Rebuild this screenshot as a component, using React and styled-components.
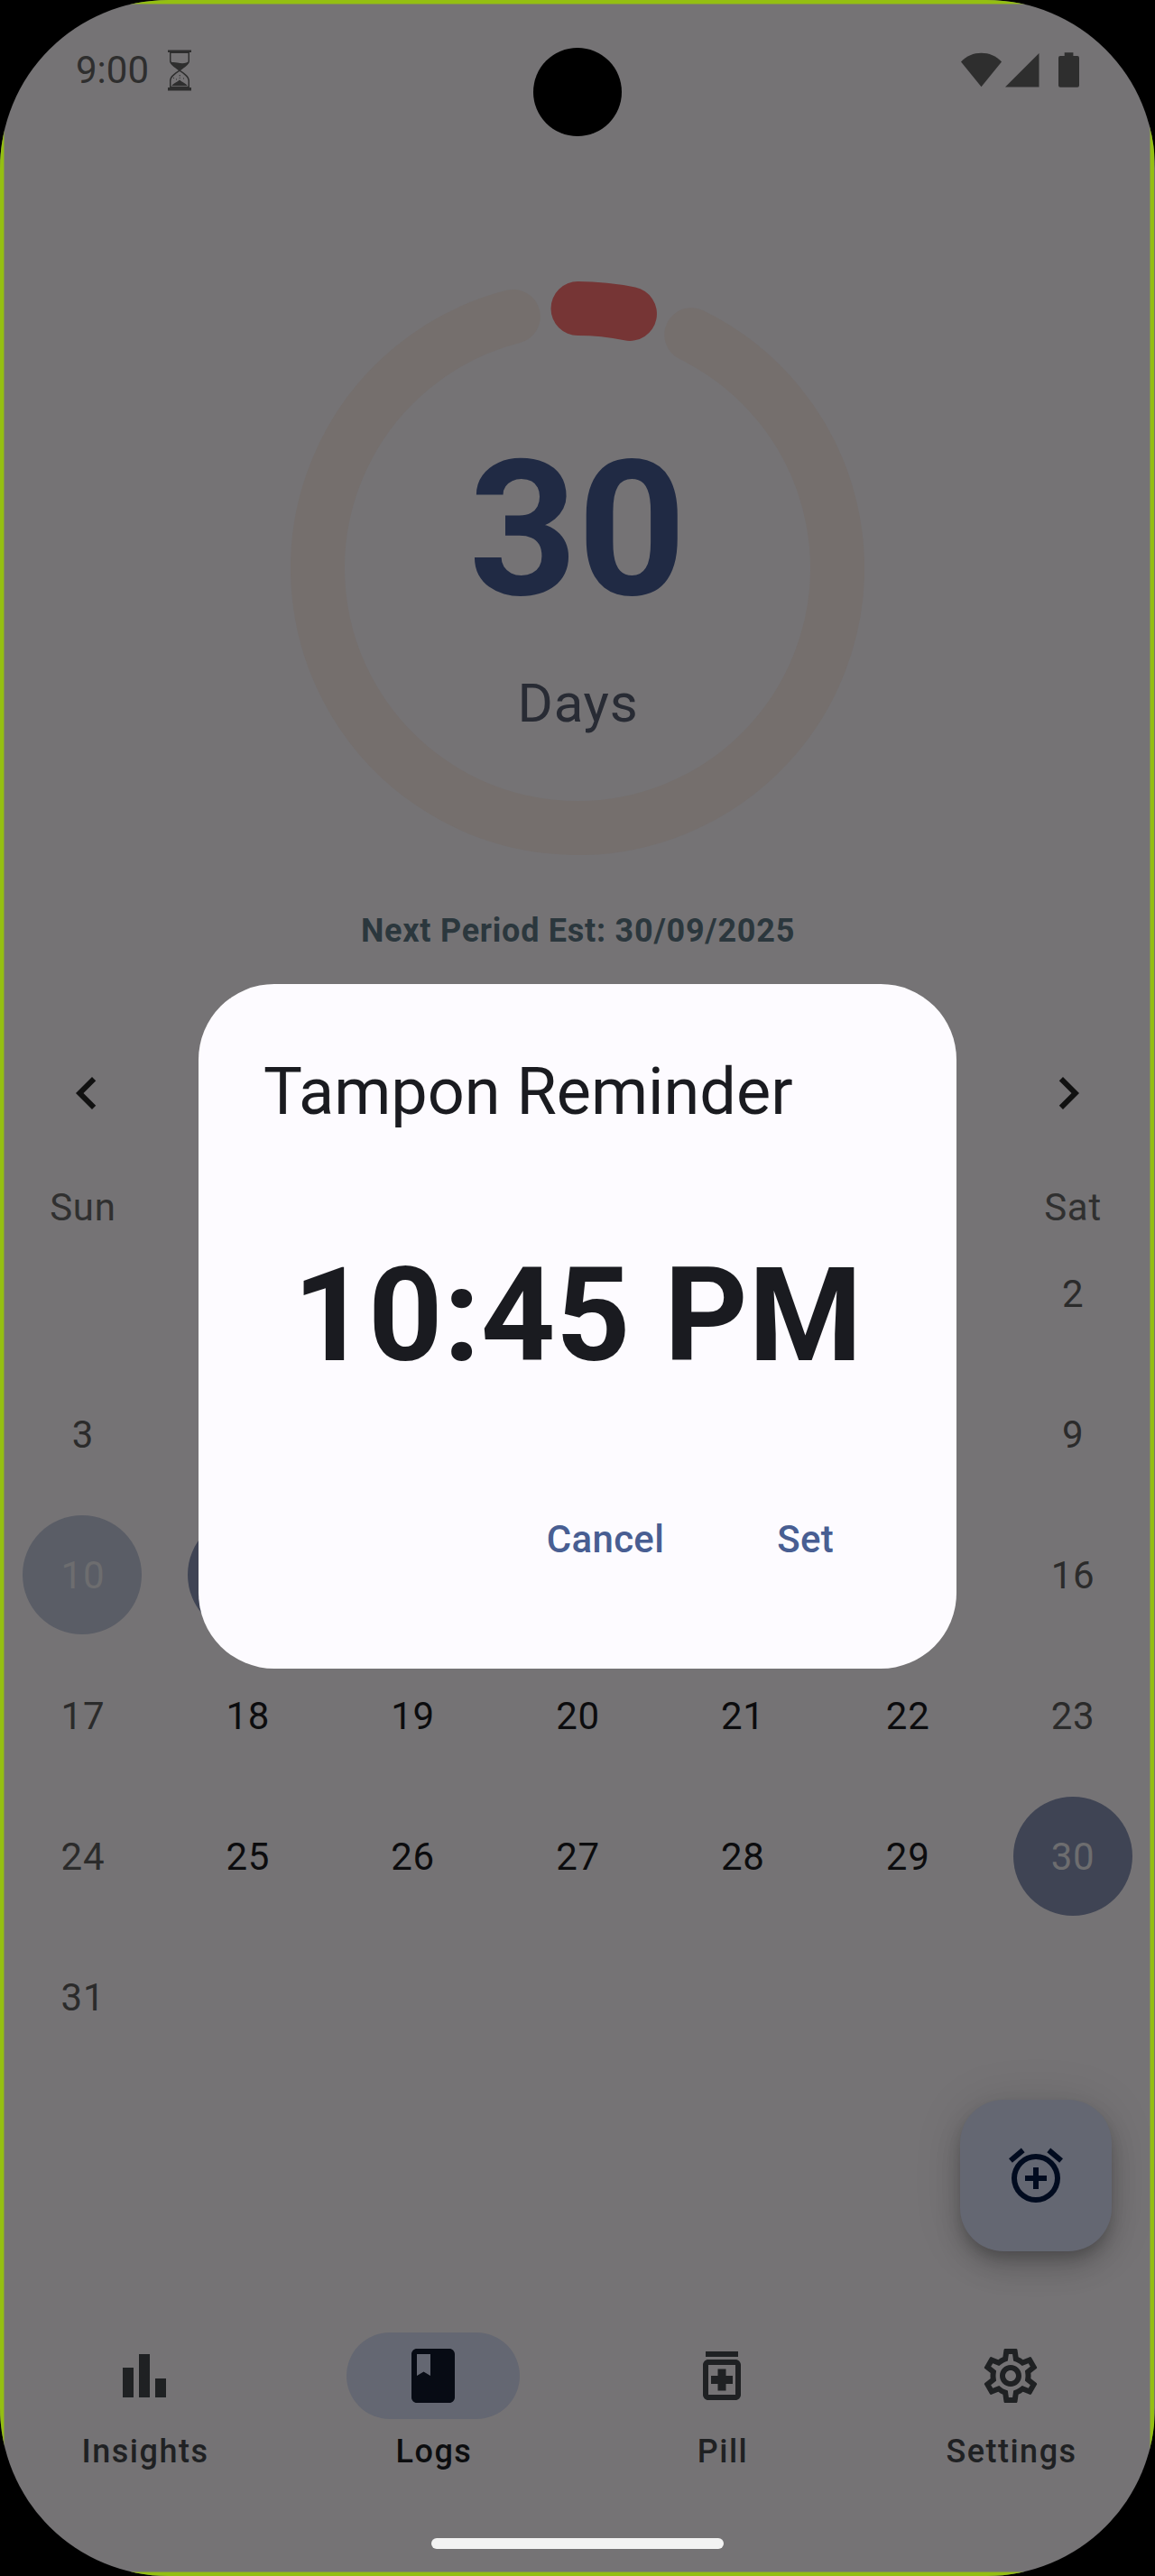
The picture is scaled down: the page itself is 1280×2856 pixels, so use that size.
import React from "react";
import styled, { createGlobalStyle } from "styled-components";
import {
  MdBarChart,
  MdBook,
  MdChevronLeft,
  MdChevronRight,
  MdOutlineSettings,
} from "react-icons/md";

const GlobalStyle = createGlobalStyle`
  * { box-sizing: border-box; }
  html, body { margin: 0; padding: 0; background: #000; }
  body { font-family: Roboto, "Liberation Sans", sans-serif; }
`;

const Screen = styled.main`
  position: relative;
  display: flex;
  flex-direction: column;
  width: 1280px;
  height: 2856px;
  overflow: hidden;
  border-radius: 187px;
  background: #757375;
`;

const EdgeLight = styled.div`
  position: absolute;
  inset: 0 1px 0 0;
  border: 4px solid #94bf12;
  box-shadow: inset 0 0 0 1px #83954b;
  pointer-events: none;
`;

const Camera = styled.div`
  position: absolute;
  top: 53px;
  left: 591px;
  width: 98px;
  height: 98px;
  border-radius: 50%;
  background: #000;
`;

const StatusBar = styled.header`
  display: flex;
  align-items: center;
  flex: none;
  height: 156px;
  padding: 0 84px;
  color: #2e2e2e;
`;

const Clock = styled.span`
  width: 102px;
  font-size: 42px;
  line-height: 60px;
`;

const StatusIcons = styled.div`
  display: flex;
  align-items: center;
  margin-left: auto;
  gap: ${(p) => p.$gap}px;
`;

const Glyph = styled.svg`
  display: block;
  flex: none;
  fill: currentColor;
`;

const Dial = styled.section`
  display: grid;
  flex: none;
  width: 636px;
  height: 636px;
  margin: 156px auto 0;
  & > * { grid-area: 1 / 1; }
`;

const Readout = styled.div`
  display: flex;
  flex-direction: column;
  align-items: center;
  gap: 33px;
  padding-top: 155px;
`;

const DayCount = styled.strong`
  font-size: 210px;
  font-weight: 700;
  line-height: 240px;
  color: #202a44;
`;

const DayUnit = styled.span`
  padding-left: 1px;
  font-size: 60px;
  line-height: 80px;
  letter-spacing: 0.75px;
  color: #282b34;
`;

const Estimate = styled.p`
  margin: 60px 0 0;
  padding-left: 1px;
  text-align: center;
  font-size: 36px;
  font-weight: 700;
  line-height: 48px;
  letter-spacing: 0.75px;
  color: #2b373d;
`;

const MonthNav = styled.div`
  display: flex;
  justify-content: space-between;
  margin-top: 120px;
  padding: 0 60px;
  color: #111;
  font-size: 72px;
  svg { display: block; }
`;

const Calendar = styled.section`
  display: grid;
  grid-template-columns: repeat(7, 1fr);
  grid-template-rows: 34px repeat(6, 156px);
  margin-top: 74px;
  font-size: 42px;
  letter-spacing: 0.75px;
`;

const Weekday = styled.span`
  padding-left: 1px;
  text-align: center;
  line-height: 34px;
  color: #303030;
`;

const DayCell = styled.span`
  display: flex;
  align-items: center;
  justify-content: center;
  color: ${(p) => (p.$weekend ? "#2b2b2b" : "#0c0c0e")};
`;

const DayNumber = styled.span`
  padding-left: 1px;
`;

const DayMark = styled.span`
  display: flex;
  align-items: center;
  justify-content: center;
  width: 132px;
  height: 132px;
  border-radius: 50%;
  background: ${(p) => (p.$faded ? "#5a5d66" : "#3f4454")};
  color: #6d6d6f;
`;

const Fab = styled.button`
  display: flex;
  align-items: center;
  justify-content: center;
  align-self: flex-end;
  flex: none;
  width: 168px;
  height: 168px;
  margin: 36px 48px 0 0;
  padding: 0;
  border: 0;
  border-radius: 48px;
  background: #646772;
  color: #010b1f;
  box-shadow:
    0 9px 15px -3px rgba(0, 0, 0, 0.2),
    0 18px 30px 0 rgba(0, 0, 0, 0.14),
    0 3px 54px 0 rgba(0, 0, 0, 0.12);
`;

const NavBar = styled.nav`
  display: grid;
  grid-template-columns: repeat(4, 1fr);
  margin-top: 90px;
`;

const NavItem = styled.div`
  display: flex;
  flex-direction: column;
  align-items: center;
  gap: 12px;
  color: ${(p) => (p.$active ? "#0c0d0f" : "#1f2123")};
`;

const NavIndicator = styled.span`
  display: flex;
  align-items: center;
  justify-content: center;
  width: 192px;
  height: 96px;
  border-radius: 48px;
  font-size: 72px;
  background: ${(p) => (p.$active ? "#646772" : "transparent")};
  color: ${(p) => (p.$active ? "#070b14" : "#1f2123")};
`;

const NavLabel = styled.span`
  padding-left: 2px;
  font-size: 36px;
  font-weight: 500;
  line-height: 48px;
  letter-spacing: 1.5px;
`;

const HomeHandle = styled.div`
  flex: none;
  width: 324px;
  height: 12px;
  margin: 72px auto 0;
  border-radius: 6px;
  background: #f3f3f3;
`;

const DialogLayer = styled.div`
  position: absolute;
  inset: 0;
  display: flex;
  align-items: flex-start;
  justify-content: center;
  padding-top: 1091px;
`;

const Dialog = styled.div`
  display: flex;
  flex-direction: column;
  width: 840px;
  height: 759px;
  padding: 72px 72px 0;
  border-radius: 84px;
  background: #fdfbff;
  color: #1a1b20;
`;

const DialogTitle = styled.h2`
  margin: 0;
  font-size: 72px;
  font-weight: 400;
  line-height: 96px;
`;

const ReminderTime = styled.div`
  margin-top: 104px;
  padding-left: 1px;
  text-align: center;
  font-size: 144px;
  font-weight: 700;
  line-height: 192px;
  letter-spacing: 0.75px;
  white-space: nowrap;
`;

const DialogActions = styled.div`
  display: flex;
  justify-content: flex-end;
  gap: 125px;
  margin-top: 122px;
  padding-right: 64px;
`;

const TextButton = styled.button`
  padding: 0;
  border: 0;
  background: none;
  font: 500 42px/60px Roboto, "Liberation Sans", sans-serif;
  letter-spacing: 0.3px;
  color: #485e92;
`;

const RADIUS = 288;
const CENTER = 318;

function arcPath(fromDeg, toDeg) {
  const point = (deg) => {
    const a = (deg * Math.PI) / 180;
    return `${CENTER + RADIUS * Math.sin(a)} ${CENTER - RADIUS * Math.cos(a)}`;
  };
  const large = toDeg - fromDeg > 180 ? 1 : 0;
  return `M${point(fromDeg)}A${RADIUS} ${RADIUS} 0 ${large} 1 ${point(toDeg)}`;
}

function CycleRing() {
  return (
    <svg width="636" height="636" viewBox="0 0 636 636" fill="none" strokeWidth="60" strokeLinecap="round">
      <path d={arcPath(26, 345.7)} stroke="#756f6d" />
      <path d={arcPath(0.1, 11.61)} stroke="#763535" />
    </svg>
  );
}

function Hourglass() {
  return (
    <Glyph width="26" height="46" viewBox="0 0 26 46">
      <path d="M0 0.5H26V3H24V13C23.5 17 18 20 14.5 22.7V23.5C18 25.5 23.5 29 24 34V42H26V45.5H0V42H2V34C2.500 29 8 25.500 11.500 23.500V22.700C8 20 2.500 17 2 13V3H0ZM3.500 4V12.800C4 14 4.500 14.300 5.500 14C9 13.600 15 16.500 20.500 14.500C22 14 22.500 13.500 22.500 12.800V4ZM12.700 24.300C9 27 4 30 3.500 34.500V40.800H22.500V34.500C22 30 17 27 13.300 24.300Z" fillRule="evenodd" />
      <path d="M4.500 40C5 38 9 37 13 33.500C17 37 21 38 21.500 40ZM12.700 28h1v1.500h-1zM12.700 31h1v1h-1zM6 31h1v1h-1zM9 32.500h1v1h-1zM17 31.500h1v1h-1z" />
    </Glyph>
  );
}

function Wifi() {
  return (
    <Glyph width="45" height="40" viewBox="0 0 45 40">
      <path d="M0 10.500C6 4 14 0.800 22.500 0.800S39 4 45 10.500L22.500 38.300Z" />
    </Glyph>
  );
}

function Signal() {
  return (
    <Glyph width="38" height="40" viewBox="0 0 38 40">
      <path d="M37.500 1V38.500H0Z" />
    </Glyph>
  );
}

function Battery() {
  return (
    <Glyph width="23" height="40" viewBox="0 0 23 40">
      <path d="M6.700 0.200H16.400V4H21Q23 4 23 6V36.800Q23 38.800 21 38.800H2Q0 38.800 0 36.800V6Q0 4 2 4H6.700Z" />
    </Glyph>
  );
}

function AlarmAdd() {
  return (
    <Glyph width="72" height="72" viewBox="0 0 24 24">
      <path d="M7.880 3.390 6.600 1.860 2 5.710l1.290 1.530ZM22 5.720l-4.600-3.860-1.290 1.530 4.600 3.860ZM12 4a9 9 0 1 0 0 18 9 9 0 0 0 0-18Zm0 16a7 7 0 1 1 0-14 7 7 0 0 1 0 14ZM13 9h-2v3H8v2h3v3h2v-3h3v-2h-3Z" />
    </Glyph>
  );
}

function Medication() {
  return (
    <Glyph width="72" height="72" viewBox="0 0 24 24">
      <path d="M6 3h12v2H6zM17 6H7c-1.100 0-2 .9-2 2v11c0 1.100.9 2 2 2h10c1.100 0 2-.9 2-2V8c0-1.100-.9-2-2-2zm0 13H7V8h10zM10.500 17.500h3V15H16v-3h-2.500V9.500h-3V12H8v3h2.500z" />
    </Glyph>
  );
}

const WEEKDAYS = ["Sun", "", "", "", "", "", "Sat"];

const WEEKS = [
  [null, null, null, null, null, null, 2],
  [3, null, null, null, null, null, 9],
  [10, "mark", null, null, null, null, 16],
  [17, 18, 19, 20, 21, 22, 23],
  [24, 25, 26, 27, 28, 29, 30],
  [31, null, null, null, null, null, null],
];

const NAV_ITEMS = [
  { label: "Insights", icon: <MdBarChart /> },
  { label: "Logs", icon: <MdBook />, active: true },
  { label: "Pill", icon: <Medication /> },
  { label: "Settings", icon: <MdOutlineSettings /> },
];

function Day({ value, column }) {
  const weekend = column === 0 || column === 6;
  if (value === null) return <DayCell />;
  if (value === "mark") return <DayCell><DayMark /></DayCell>;
  if (value === 10 || value === 30) {
    return (
      <DayCell>
        <DayMark $faded={value === 10}>
          <DayNumber>{value}</DayNumber>
        </DayMark>
      </DayCell>
    );
  }
  return (
    <DayCell $weekend={weekend}>
      <DayNumber>{value}</DayNumber>
    </DayCell>
  );
}

export default function App() {
  return (
    <>
      <GlobalStyle />
      <Screen>
        <StatusBar>
          <Clock>9:00</Clock>
          <Hourglass />
          <StatusIcons $gap={21}>
            <StatusIcons $gap={4}>
              <Wifi />
              <Signal />
            </StatusIcons>
            <Battery />
          </StatusIcons>
        </StatusBar>

        <Dial>
          <CycleRing />
          <Readout>
            <DayCount>30</DayCount>
            <DayUnit>Days</DayUnit>
          </Readout>
        </Dial>
        <Estimate>Next Period Est: 30/09/2025</Estimate>

        <MonthNav>
          <MdChevronLeft />
          <MdChevronRight />
        </MonthNav>
        <Calendar>
          {WEEKDAYS.map((name, i) => (
            <Weekday key={i}>{name}</Weekday>
          ))}
          {WEEKS.map((week, r) =>
            week.map((value, c) => <Day key={`${r}-${c}`} value={value} column={c} />)
          )}
        </Calendar>

        <Fab aria-label="Add reminder">
          <AlarmAdd />
        </Fab>

        <NavBar>
          {NAV_ITEMS.map(({ label, icon, active }) => (
            <NavItem key={label} $active={active}>
              <NavIndicator $active={active}>{icon}</NavIndicator>
              <NavLabel>{label}</NavLabel>
            </NavItem>
          ))}
        </NavBar>
        <HomeHandle />

        <DialogLayer>
          <Dialog role="dialog">
            <DialogTitle>Tampon Reminder</DialogTitle>
            <ReminderTime>10:45 PM</ReminderTime>
            <DialogActions>
              <TextButton>Cancel</TextButton>
              <TextButton>Set</TextButton>
            </DialogActions>
          </Dialog>
        </DialogLayer>
        <Camera />
        <EdgeLight />
      </Screen>
    </>
  );
}
